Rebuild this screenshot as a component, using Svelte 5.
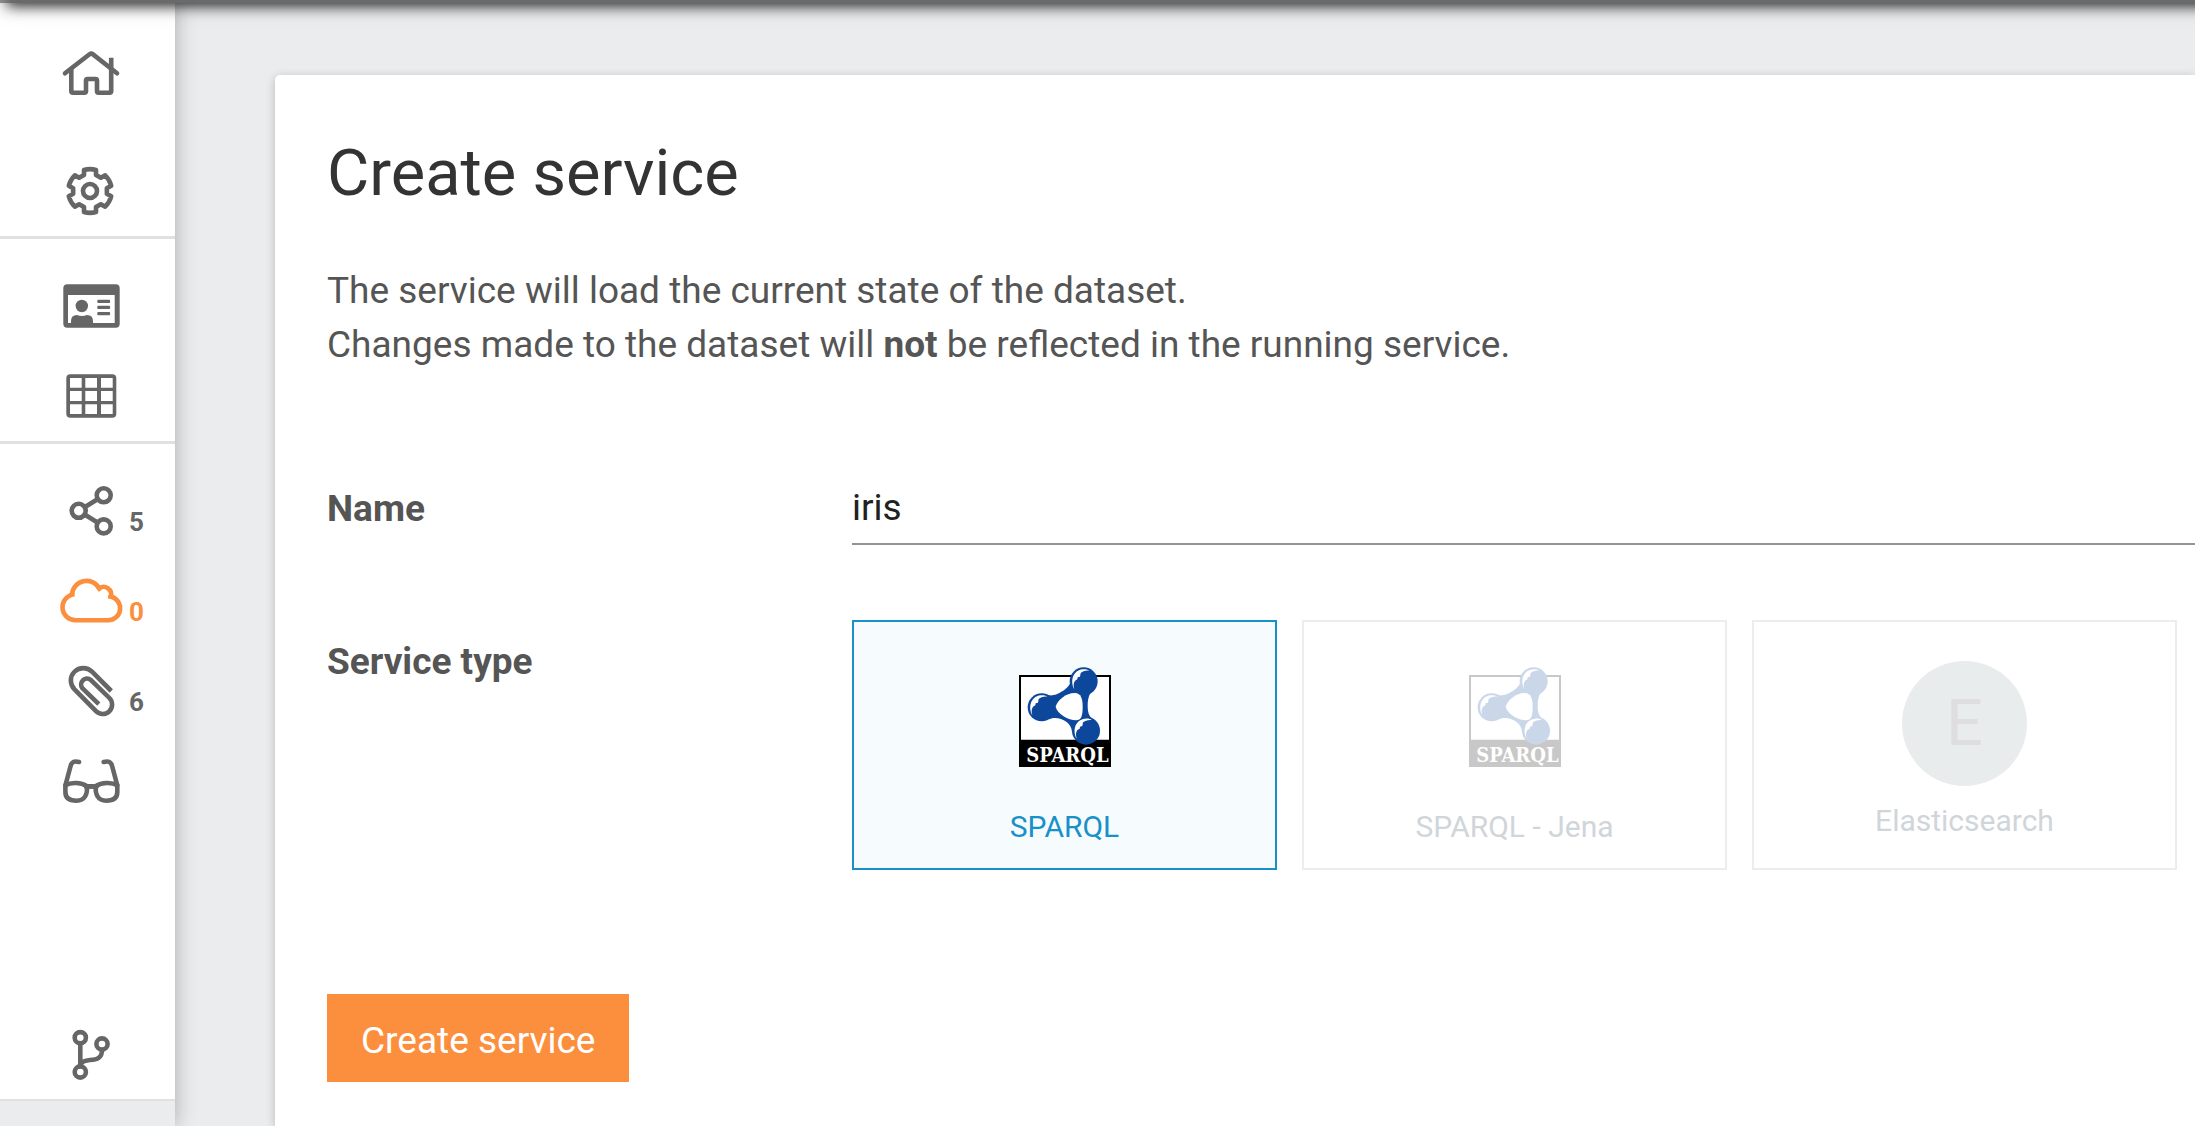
<script>
  let name = $state('iris');
  let serviceType = $state('sparql');

  const services = [
    { id: 'sparql', label: 'SPARQL', logo: true, disabled: false },
    { id: 'jena', label: 'SPARQL - Jena', logo: true, disabled: true },
    { id: 'elasticsearch', label: 'Elasticsearch', logo: false, disabled: true }
  ];

  // Closed outline of a cog with six teeth, centred on (cx, cy).
  function cogPath(cx, cy) {
    const tooth = [[-6, -16], [-6, -21], [6, -21], [6, -16]];
    let d = '';
    for (let i = 0; i < 6; i++) {
      const a = (i * Math.PI) / 3;
      const p = tooth.map(([x, y]) =>
        [cx + x * Math.cos(a) - y * Math.sin(a), cy + x * Math.sin(a) + y * Math.cos(a)]
          .map((n) => n.toFixed(2))
          .join(' ')
      );
      d += `${i ? 'L' : 'M'}${p[0]}L${p[1]}A22 22 0 0 1 ${p[2]}L${p[3]}`;
    }
    return d + 'Z';
  }
  const cog = cogPath(31, 27);
</script>

{#snippet molecule()}
  <svg class="logo" viewBox="54 50 282 306" aria-hidden="true">
    <path fill="#000" d="M57 77h276v276H57z" />
    <path fill="#fff" d="M63 83h264v188H63z" />
    <g fill="#0c479c">
      <circle cx="251" cy="96" r="42" />
      <circle cx="125" cy="174" r="42" />
      <circle cx="258" cy="244" r="42" />
      <path d="M146 137C163 144 209 118 211 98L285 120C271 126 263 142 263 170C263 196 271 206 284 212L216 248C215 216 172 198 148 210Z" />
    </g>
    <path fill="#fff" d="M167 172C172 152 200 130 225 131C243 132 248 148 248 172C248 200 244 212 228 213C205 212 172 194 167 172Z" />
    {#each [[251, 96], [125, 174], [258, 244]] as [x, y]}
      <path
        fill="#fff"
        transform="translate({x} {y})"
        d="M-28 24C-40 4-36-32-3-36C7-37 13-35 17-32C5-33-3-30-9-25L-11-14L-18-12L-19-6L-26-2C-31 6-31 14-28 24Z"
      />
    {/each}
    <text class="logo-text" x="79" y="339">SPARQL</text>
  </svg>
{/snippet}

<div class="page">
  <header class="topbar"></header>
  <div class="body">
    <aside class="sidebar">
      <nav class="nav">
        <div class="group first">
          <a href="#home" aria-label="Home">
            <svg viewBox="0 0 64 54">
              <path d="M6 27.3L30.5 8.3Q32.3 7 34 8.3L58 27.3" />
              <path d="M12.3 23V45Q12.3 46.7 14 46.7H25.5Q27 46.7 27 45V34.5Q27 33 28.5 33H36.5Q38 33 38 34.5V45Q38 46.7 39.5 46.7H50.5Q52.2 46.7 52.2 45V11.7" stroke-linecap="butt" />
            </svg>
          </a>
          <a href="#settings" aria-label="Settings">
            <svg viewBox="0 0 64 54">
              <path d={cog} />
              <circle cx="31" cy="27" r="7" />
            </svg>
          </a>
        </div>
        <div class="group">
          <a href="#info" aria-label="Dataset card">
            <svg class="solid" viewBox="0 0 64 54">
              <path fill-rule="evenodd" d="M8.3 5.3H56.7Q60.7 5.3 60.7 9.3V44.7Q60.7 48.7 56.7 48.7H8.3Q4.3 48.7 4.3 44.7V9.3Q4.3 5.3 8.3 5.3ZM9 16V44H55.7V16Z" />
              <circle cx="22.8" cy="27" r="6.2" />
              <path d="M12 45V42Q12 36 18 36Q22.8 38 28 36Q34 36 34 42V45Z" />
              <rect x="38.3" y="20.7" width="12.8" height="3.3" rx="1" />
              <rect x="38.3" y="26.8" width="12.8" height="3.3" rx="1" />
              <rect x="38.3" y="33" width="12.8" height="3.3" rx="1" />
            </svg>
          </a>
          <a href="#table" aria-label="Table">
            <svg class="solid" viewBox="0 0 64 54">
              <path fill-rule="evenodd" d="M11.3 5.3H53.3Q57.3 5.3 57.3 9.3V44.7Q57.3 48.7 53.3 48.7H11.3Q7.3 48.7 7.3 44.7V9.3Q7.3 5.3 11.3 5.3ZM11 9V18.7H22.7V9ZM26.3 9V18.7H38V9ZM42 9V18.7H53.7V9ZM11 22V32H22.7V22ZM26.3 22V32H38V22ZM42 22V32H53.7V22ZM11 35.3V45H22.7V35.3ZM26.3 35.3V45H38V35.3ZM42 35.3V45H53.7V35.3Z" />
            </svg>
          </a>
        </div>
        <div class="group">
          <a href="#graphs" aria-label="Graphs">
            <svg viewBox="0 0 64 54">
              <circle cx="19.7" cy="26.8" r="7" />
              <circle cx="44.7" cy="11.3" r="7" />
              <circle cx="44.7" cy="42.4" r="7" />
              <path d="M26 23L38.5 15.3M26 30.8L38.5 38.5" />
            </svg>
            <span class="count">5</span>
          </a>
          <a class="active" href="#services" aria-label="Services">
            <svg viewBox="0 0 64 54">
              <path stroke-linejoin="miter" d="M16.5 46.3A13.1 13.1 0 0 1 13 20.6A14.6 14.6 0 0 1 40.3 14.3A7.5 7.5 0 0 1 51.8 22.6A12 12 0 0 1 49 46.3Z" />
              <path stroke-linecap="butt" d="M13.2 22.5V19M39 16.2L41 13.5M51.5 24.5V21" />
            </svg>
            <span class="count">0</span>
          </a>
          <a href="#assets" aria-label="Assets">
            <svg viewBox="0 0 64 54">
              <path stroke-linecap="butt" d="M52.3 27L33 7.7A12.4 12.4 0 0 0 15.5 25.3L37 47.2A9.4 9.4 0 0 0 50.4 34L31.7 15.8A6 6 0 0 0 23.3 24.2L39.8 40.2" />
            </svg>
            <span class="count">6</span>
          </a>
          <a href="#insights" aria-label="Insights">
            <svg viewBox="0 0 64 54">
              {#each ['', 'translate(64.7 0) scale(-1 1)'] as flip}
                <g transform={flip || null}>
                  <path d="M20 8C15 6.5 12.5 8 11.6 12L6.5 31" />
                  <path d="M6.4 31.3C12 28 22 28.3 28 32.2C28.6 40 26 46.7 17.5 46.7C9 46.7 6.4 42.5 6.4 38Z" />
                  <path d="M27 32.4H33" />
                </g>
              {/each}
            </svg>
          </a>
        </div>
        <div class="group last">
          <a href="#branches" aria-label="Branches">
            <svg viewBox="0 0 64 54">
              <circle cx="21.3" cy="10.7" r="5.6" />
              <circle cx="43" cy="17" r="5.6" />
              <circle cx="21.3" cy="45" r="5.6" />
              <path d="M21.3 16.5V39M43 23C43 31 38 32.5 31 33C26 33.4 23 34.2 21.5 37.5" />
            </svg>
          </a>
        </div>
      </nav>
    </aside>

    <main class="content">
      <form class="card" onsubmit={(e) => e.preventDefault()}>
        <h1>Create service</h1>
        <p>
          The service will load the current state of the dataset.<br />
          Changes made to the dataset will <strong>not</strong> be reflected in the running service.
        </p>
        <div class="field">
          <label class="field-label" for="service-name">Name</label>
          <input id="service-name" class="text-input" type="text" bind:value={name} />
        </div>
        <div class="field" role="radiogroup" aria-labelledby="type-label">
          <span class="field-label type-label" id="type-label">Service type</span>
          <div class="options">
            {#each services as s}
              <label class="option" class:selected={serviceType === s.id} class:disabled={s.disabled}>
                <input type="radio" name="type" value={s.id} disabled={s.disabled} bind:group={serviceType} />
                {#if s.logo}
                  {@render molecule()}
                {:else}
                  <span class="avatar" aria-hidden="true">{s.label[0]}</span>
                {/if}
                <span class="option-label">{s.label}</span>
              </label>
            {/each}
          </div>
        </div>
        <button class="submit" type="submit">Create service</button>
      </form>
    </main>
  </div>
</div>

<style>
  :global(body) {
    background: #ebecee;
    font-family: Roboto, sans-serif;
  }
  .page {
    display: flex;
    flex-direction: column;
    min-height: 100vh;
    overflow: hidden;
  }
  .topbar {
    position: relative;
    z-index: 3;
    flex: none;
    height: 24px;
    margin: -21px -40px 0 0;
    background: linear-gradient(90deg, #8a8b8c, #696a6b 12px);
    box-shadow: 5px 5px 14px -2px rgba(0, 0, 0, 0.82), 0 4px 24px rgba(0, 0, 0, 0.12);
  }
  .body {
    display: flex;
    flex: 1;
  }
  .sidebar {
    position: relative;
    z-index: 2;
    display: flex;
    flex: none;
    width: 175px;
    padding-bottom: 25px;
    box-sizing: border-box;
    background: #ebecee;
    box-shadow: 0 0 20px rgba(0, 0, 0, 0.28);
  }
  .nav {
    display: flex;
    flex: 1;
    flex-direction: column;
    background: #fff;
    border-bottom: 2px solid #e0e0e0;
  }
  .group {
    display: flex;
    flex-direction: column;
    padding-top: 22px;
  }
  .group + .group:not(.last) {
    border-top: 3px solid #e0e0e0;
  }
  .first {
    gap: 28px;
    padding-top: 25px;
  }
  .last {
    margin-top: auto;
  }
  .nav a {
    display: flex;
    align-items: center;
    gap: 6px;
    height: 90px;
    padding-left: 59px;
    color: #666;
    text-decoration: none;
  }
  .nav a.active {
    color: #fc8f3e;
  }
  .nav svg {
    flex: none;
    width: 64px;
    height: 54px;
    fill: none;
    stroke: currentColor;
    stroke-width: 4.6;
    stroke-linecap: round;
    stroke-linejoin: round;
  }
  .nav .solid {
    fill: currentColor;
    stroke: none;
  }
  .count {
    padding-top: 21px;
    font-size: 26px;
    font-weight: 700;
    line-height: 30px;
  }
  .content {
    display: flex;
    flex: 1;
    min-width: 0;
    padding: 72px 0 0 100px;
  }
  .card {
    flex: 1;
    min-width: 0;
    padding: 58px 0 40px 52px;
    background: #fff;
    border-radius: 5px 0 0 0;
    box-shadow: 0 2px 10px rgba(0, 0, 0, 0.22);
  }
  h1 {
    margin: 0 0 51px;
    color: #333;
    font-size: 65px;
    font-weight: 400;
    line-height: 80px;
  }
  p {
    margin: 0 0 110px;
    color: #555;
    font-size: 37px;
    line-height: 54px;
  }
  .field {
    display: grid;
    grid-template-columns: 525px 1fr;
    align-items: start;
    margin-bottom: 75px;
  }
  .field-label {
    color: #555;
    font-size: 37px;
    font-weight: 700;
    line-height: 54px;
  }
  .type-label {
    padding-top: 15px;
  }
  .text-input {
    width: 100%;
    height: 63px;
    padding: 0 0 11px;
    box-sizing: border-box;
    border: 0;
    border-bottom: 2px solid #949494;
    border-radius: 0;
    outline: 0;
    background: transparent;
    color: #212121;
    font: 400 37px/50px Roboto, sans-serif;
  }
  .options {
    display: grid;
    grid-template-columns: repeat(3, 1fr);
    gap: 25px;
    padding-right: 18px;
  }
  .option {
    position: relative;
    display: flex;
    flex-direction: column;
    align-items: center;
    min-height: 250px;
    padding-top: 39px;
    box-sizing: border-box;
    border: 2px solid #ededed;
    cursor: pointer;
  }
  .option input {
    position: absolute;
    opacity: 0;
  }
  .option.selected {
    border-color: #1890c8;
    background: #f6fbfe;
    color: #1890c8;
  }
  .option.disabled {
    color: #d0d5d9;
    cursor: default;
  }
  .logo {
    width: 94px;
    height: 102px;
    margin: 5px 0 41px;
  }
  .disabled .logo {
    opacity: 0.21;
  }
  .logo-text {
    fill: #fff;
    font-family: "DejaVu Serif Condensed", "DejaVu Serif", serif;
    font-size: 60px;
    font-weight: 700;
  }
  .avatar {
    width: 125px;
    height: 125px;
    margin-bottom: 17px;
    border-radius: 50%;
    background: #e9eced;
    color: #dedede;
    font-size: 65px;
    line-height: 125px;
    text-align: center;
  }
  .option-label {
    font-size: 30px;
    line-height: 36px;
  }
  .submit {
    display: block;
    height: 88px;
    margin-top: 124px;
    padding: 5px 34px 0;
    border: 0;
    background: #fc8f3e;
    color: #fff;
    font: 400 37px/54px Roboto, sans-serif;
    cursor: pointer;
  }
</style>
